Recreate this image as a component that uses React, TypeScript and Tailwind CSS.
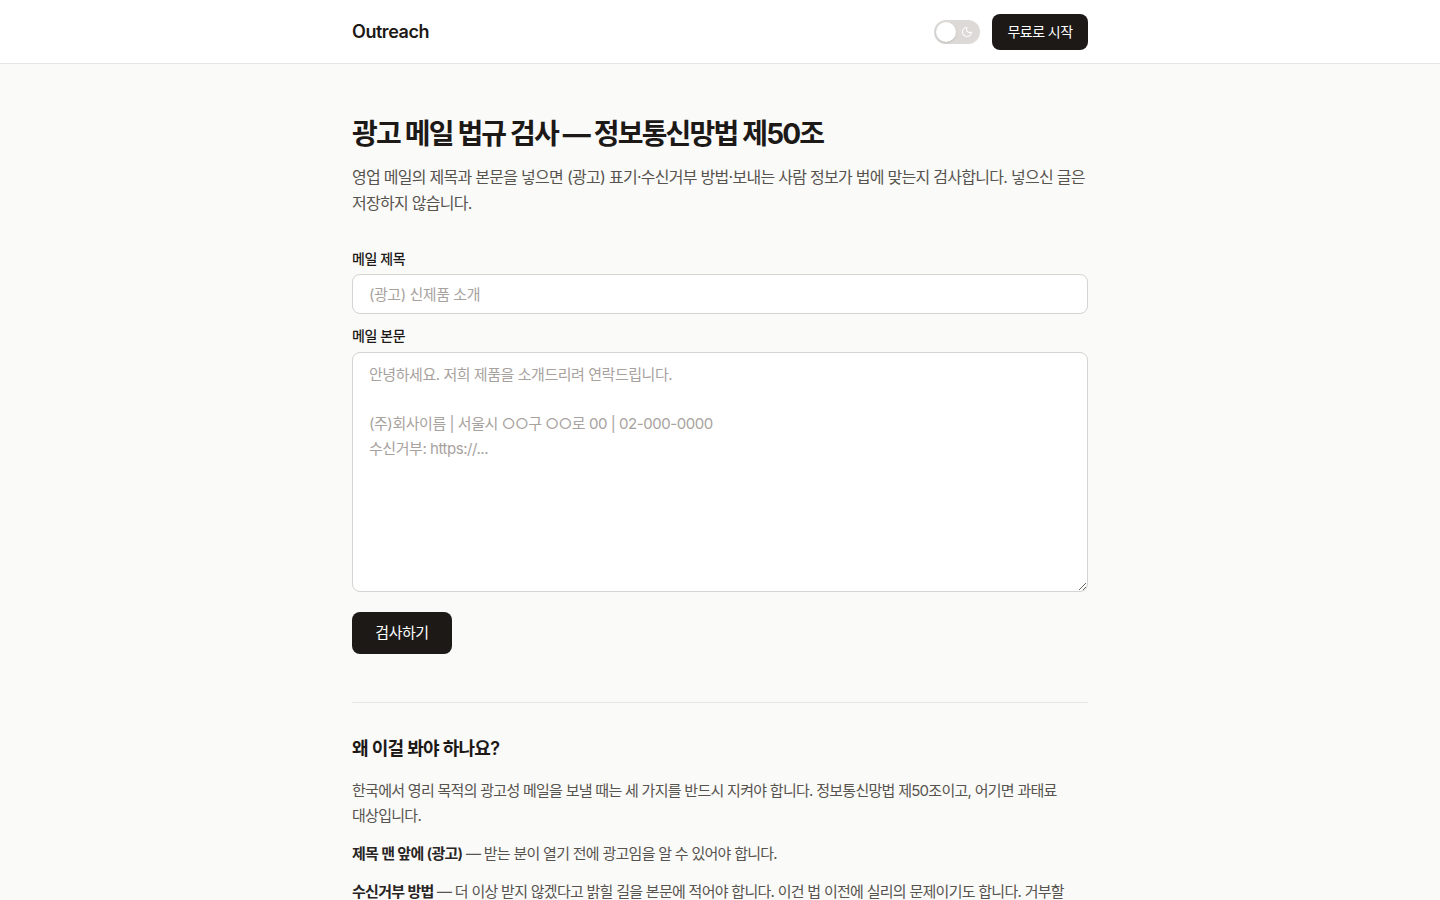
import { Moon } from 'lucide-react';

const FONT = { fontFamily: 'Inter, "Noto Sans CJK KR", sans-serif' };

function ThemeToggle() {
  return (
    <button className="relative flex h-6 w-[46px] items-center rounded-full bg-[#dcd9d6] px-[2px]">
      <span className="h-5 w-5 rounded-full bg-white shadow-sm" />
      <Moon className="absolute right-[7px] h-3 w-3 text-white" strokeWidth={2.2} />
    </button>
  );
}

export default function App() {
  return (
    <div className="min-h-screen bg-[#fafaf9] text-[#1c1917] break-keep" style={FONT}>
      <header className="h-16 border-b border-[#e7e5e4] bg-white">
        <div className="mx-auto flex h-full w-[736px] items-center justify-between">
          <span className="text-lg font-semibold tracking-tight">Outreach</span>
          <div className="flex items-center gap-3">
            <ThemeToggle />
            <button className="h-9 w-[96px] rounded-lg bg-[#1c1917] text-sm tracking-[-0.04em] text-white">무료로 시작</button>
          </div>
        </div>
      </header>

      <main className="mx-auto w-[736px] pt-[50px]">
        <h1 className="text-[28px] font-bold leading-[40px] tracking-[-0.065em]">광고 메일 법규 검사 — 정보통신망법 제50조</h1>
        <p className="mt-[10px] text-base leading-[26px] tracking-[-0.045em] text-[#57534e]">
          영업 메일의 제목과 본문을 넣으면 (광고) 표기·수신거부 방법·보내는 사람 정보가 법에 맞는지 검사합니다. 넣으신 글은 저장하지 않습니다.
        </p>

        {/* Form */}
        <div className="mt-[33px]">
          <label className="block text-sm font-medium leading-5 tracking-[-0.03em]">메일 제목</label>
          <input
            className="mt-[5px] block h-10 w-full rounded-lg border border-[#d6d3d1] bg-white px-4 text-[15px] tracking-[-0.03em] outline-none placeholder:text-[#a8a29e]"
            placeholder="(광고) 신제품 소개"
          />
          <label className="mt-[12px] block text-sm font-medium leading-5 tracking-[-0.03em]">메일 본문</label>
          <textarea
            className="mt-[6px] block h-[240px] w-full rounded-lg border border-[#d6d3d1] bg-white px-4 py-[10px] text-[15px] leading-[24.5px] tracking-[-0.03em] outline-none placeholder:text-[#a8a29e]"
            placeholder={'안녕하세요. 저희 제품을 소개드리려 연락드립니다.\n\n(주)회사이름 | 서울시 ○○구 ○○로 00 | 02-000-0000\n수신거부: https://...'}
          />
          <button className="mt-5 block h-[42px] w-[100px] rounded-lg bg-[#1c1917] text-[15px] tracking-[-0.03em] text-white">검사하기</button>
        </div>

        <hr className="mt-[48px] border-[#e7e5e4]" />

        <section className="pt-[32px] tracking-[-0.045em]">
          <h2 className="text-lg font-semibold leading-7">왜 이걸 봐야 하나요?</h2>
          <p className="mt-[15px] text-[15px] leading-[25px] text-[#57534e]">
            한국에서 영리 목적의 광고성 메일을 보낼 때는 세 가지를 반드시 지켜야 합니다. 정보통신망법 제50조이고, 어기면 과태료 대상입니다.
          </p>
          <p className="mt-[13px] text-[15px] leading-[25px] text-[#57534e]">
            <strong className="font-semibold text-[#292524]">제목 맨 앞에 (광고)</strong> — 받는 분이 열기 전에 광고임을 알 수 있어야 합니다.
          </p>
          <p className="mt-[13px] text-[15px] leading-[25px] text-[#57534e]">
            <strong className="font-semibold text-[#292524]">수신거부 방법</strong> — 더 이상 받지 않겠다고 밝힐 길을 본문에 적어야 합니다. 이건 법 이전에 실리의 문제이기도 합니다. 거부할 길이 없으면 받는 분은 스팸 신고를 누르게 됩니다.
          </p>
          <p className="mt-[13px] pb-12 text-[15px] leading-[25px] text-[#57534e]">
            <strong className="font-semibold text-[#292524]">보내는 사람 정보</strong> — 이름과 연락처를 본문에 밝혀야 합니다.
          </p>
        </section>
      </main>
    </div>
  );
}
